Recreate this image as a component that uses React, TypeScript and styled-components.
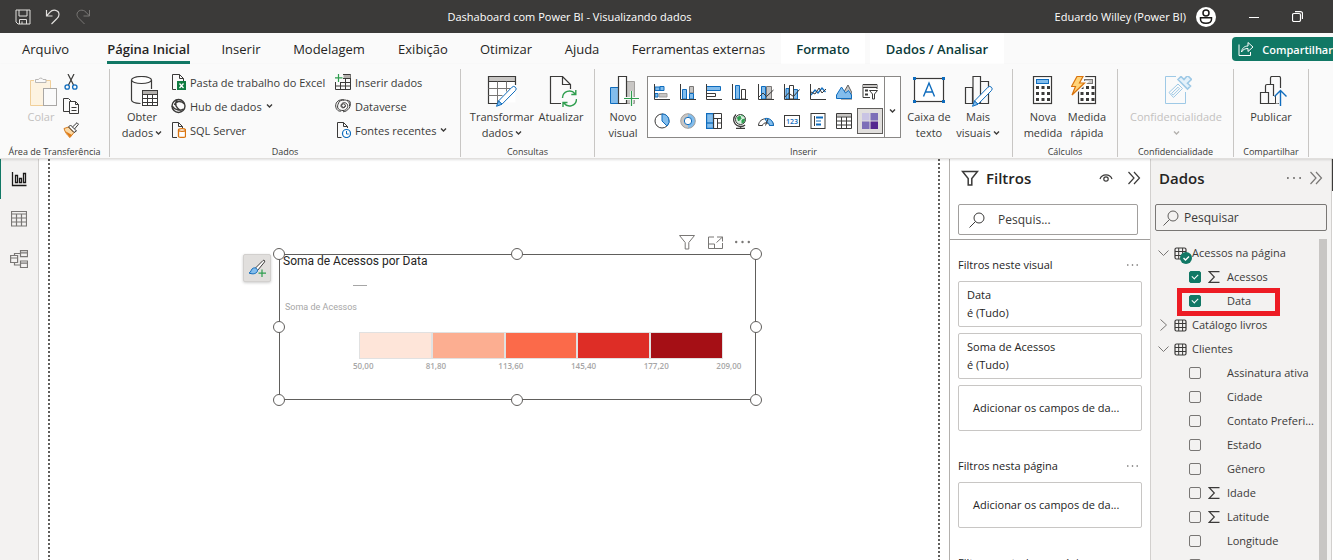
import React from "react";
import styled, { createGlobalStyle, css } from "styled-components";

const GlobalStyle = createGlobalStyle`
  *, *::before, *::after { box-sizing: border-box; }
  html, body, #root { height: 100%; }
  body {
    margin: 0;
    overflow: hidden;
    background: #fff;
    color: #252423;
    font-family: "Open Sans", "Noto Sans", sans-serif;
    font-size: 12px;
  }
  button, input { font: inherit; color: inherit; }
  button { background: none; border: 0; padding: 0; cursor: pointer; }
  svg { display: block; flex: none; }
`;

/* ---------- shell ---------- */

const Shell = styled.div`
  display: flex;
  flex-direction: column;
  height: 100vh;
  overflow: hidden;
`;

const TitleBar = styled.header`
  display: grid;
  grid-template-columns: 1fr auto 1fr;
  align-items: center;
  flex: none;
  height: 33px;
  background: #3b3a39;
  color: #fff;
  font-size: 11px;
`;

const QuickActions = styled.div`
  display: flex;
  align-items: center;
  gap: 14px;
  padding-left: 15px;
`;

const IconButton = styled.button`
  display: flex;
  align-items: center;
  justify-content: center;
  flex: none;
`;

const WindowTitle = styled.h1`
  margin: 0;
  padding-right: 194px;
  font-size: 11px;
  font-weight: 400;
  line-height: 16px;
`;

const WindowArea = styled.div`
  display: flex;
  align-items: center;
  justify-content: flex-end;
  gap: 33px;
  padding-right: 30px;
  white-space: nowrap;
`;

const Account = styled.button`
  display: flex;
  align-items: center;
  gap: 10px;
`;

/* ---------- tabs ---------- */

const TabBar = styled.nav`
  display: flex;
  align-items: stretch;
  flex: none;
  height: 31px;
  background: #fafafa;
`;

const Tab = styled.button<{ $width: number; $active?: boolean; $context?: boolean }>`
  display: flex;
  justify-content: center;
  flex: none;
  width: ${(p) => p.$width}px;
  font-size: 13px;
  line-height: 32px;
  white-space: nowrap;
  ${(p) => p.$active && css`font-weight: 600;`}
  ${(p) =>
    p.$context &&
    css`
      margin-right: 5px;
      background: #fff;
      color: #0b3b3a;
      font-weight: 600;
    `}
`;

const TabText = styled.span<{ $active?: boolean }>`
  height: 31px;
  ${(p) => p.$active && css`border-bottom: 3px solid #117865;`}
`;

const ShareButton = styled.button`
  display: flex;
  align-items: center;
  gap: 8px;
  flex: none;
  height: 24px;
  margin: 4px 0 0 auto;
  padding: 0 0 0 6px;
  border-radius: 4px 0 0 4px;
  background: #117865;
  color: #fff;
  font-size: 11px;
  font-weight: 600;
`;

/* ---------- ribbon ---------- */

const Ribbon = styled.section`
  position: relative;
  z-index: 1;
  display: flex;
  flex: none;
  height: 95px;
  padding-top: 5px;
  background: #fafafa;
  border-bottom: 1px solid #e1dfdd;
  box-shadow: 0 1px 2px rgba(0, 0, 0, 0.12);
`;

const Group = styled.div<{ $width: number }>`
  display: flex;
  flex-direction: column;
  justify-content: space-between;
  flex: none;
  width: ${(p) => p.$width}px;
  height: 88px;
  border-right: 1px solid #c8c6c4;
`;

const GroupBody = styled.div<{ $pad: number }>`
  display: flex;
  padding-left: ${(p) => p.$pad}px;
`;

const GroupName = styled.div`
  height: 11px;
  font-size: 9px;
  line-height: 12px;
  text-align: center;
  color: #3b3a39;
  white-space: nowrap;
`;

const BigButton = styled.button<{ $width: number; $disabled?: boolean }>`
  display: flex;
  flex-direction: column;
  align-items: center;
  flex: none;
  width: ${(p) => p.$width}px;
  padding-top: 7px;
  color: ${(p) => (p.$disabled ? "#c3c1bf" : "#3b3a39")};
  font-size: 11px;
  line-height: 16px;
  white-space: nowrap;
`;

const LabelLine = styled.span`
  display: flex;
  align-items: center;
  gap: 2px;
  min-height: 16px;
  &:first-of-type { margin-top: 1px; }
`;

const SmallColumn = styled.div<{ $width: number }>`
  display: flex;
  flex-direction: column;
  flex: none;
  width: ${(p) => p.$width}px;
  padding-top: 1px;
`;

const SmallButton = styled.button`
  display: flex;
  align-items: center;
  gap: 4px;
  height: 24px;
  color: #3b3a39;
  font-size: 11px;
  white-space: nowrap;
`;

const Gallery = styled.div`
  display: flex;
  flex: none;
  width: 254px;
  height: 62px;
  margin-top: 7px;
  background: #fff;
  border: 1px solid #8a8886;
`;

const GalleryGrid = styled.div`
  display: grid;
  grid-template-columns: repeat(9, 26px);
  grid-template-rows: 26px 26px;
  row-gap: 3px;
  flex: 1;
  padding: 2px 0 0 1px;
`;

const GalleryItem = styled.button<{ $selected?: boolean }>`
  display: flex;
  align-items: center;
  justify-content: center;
  ${(p) => p.$selected && css`background: #e1dfdd; border: 1px solid #605e5c;`}
`;

const GalleryMore = styled.button`
  display: flex;
  align-items: center;
  justify-content: center;
  width: 16px;
  padding-top: 8px;
  border-left: 1px solid #8a8886;
`;

/* ---------- workspace ---------- */

const Workspace = styled.div`
  display: flex;
  flex: 1;
  min-height: 0;
`;

const Rail = styled.nav`
  display: flex;
  flex-direction: column;
  flex: none;
  width: 39px;
  background: #f3f2f1;
  border-right: 1px solid #d2d0ce;
`;

const RailButton = styled.button<{ $active?: boolean }>`
  display: flex;
  align-items: center;
  justify-content: center;
  height: 40px;
  padding-right: 2px;
  border-left: 1px solid ${(p) => (p.$active ? "#117865" : "transparent")};
`;

const Canvas = styled.main`
  position: relative;
  flex: 1;
  min-width: 0;
  margin: 0 9px;
  background: #fff;
  &::before, &::after {
    content: "";
    position: absolute;
    top: 0;
    bottom: 0;
    width: 2px;
    background: repeating-linear-gradient(#605e5c 0 2px, #fff 2px 4px);
  }
  &::before { left: 0; }
  &::after { right: 0; }
`;

const Visual = styled.article`
  position: absolute;
  left: 231px;
  top: 95px;
  width: 477px;
  height: 146px;
  border: 1px solid #605e5c;
`;

const handleSpots = {
  tl: "left: -7px; top: -7px;",
  tc: "left: calc(50% - 7px); top: -7px;",
  tr: "right: -7px; top: -7px;",
  ml: "left: -7px; top: calc(50% - 6px);",
  mr: "right: -7px; top: calc(50% - 6px);",
  bl: "left: -7px; bottom: -7px;",
  bc: "left: calc(50% - 7px); bottom: -7px;",
  br: "right: -7px; bottom: -7px;",
};

const Handle = styled.span<{ $spot: keyof typeof handleSpots }>`
  position: absolute;
  width: 12px;
  height: 12px;
  background: #fff;
  border: 1px solid #605e5c;
  border-radius: 50%;
  ${(p) => handleSpots[p.$spot]}
`;

const VisualTools = styled.div`
  position: absolute;
  right: 5px;
  top: -21px;
  display: flex;
  align-items: center;
  gap: 12px;
`;

const FormatButton = styled.button`
  position: absolute;
  left: -37px;
  top: -1px;
  display: flex;
  align-items: center;
  justify-content: center;
  width: 28px;
  height: 28px;
  background: #e1dfdd;
  border: 1px solid #d2d0ce;
  border-radius: 2px;
  box-shadow: 0 1px 3px rgba(0, 0, 0, 0.2);
`;

const VisualTitle = styled.h2`
  margin: 0;
  padding: 0 3px;
  color: #252423;
  font-family: Roboto, sans-serif;
  font-size: 12px;
  font-weight: 400;
  line-height: 13px;
`;

const CategoryMark = styled.hr`
  width: 14px;
  height: 1px;
  margin: 17px 0 0 73px;
  border: 0;
  background: #a6a6a6;
`;

const MeasureName = styled.div`
  padding: 15px 0 1px 5px;
  color: #a6a6a6;
  font-family: Roboto, sans-serif;
  font-size: 9px;
  line-height: 12px;
`;

const ColorScale = styled.div`
  display: grid;
  grid-template-columns: repeat(5, 1fr);
  gap: 2px;
  width: 364px;
  height: 27px;
  margin: 18px 0 0 79px;
  padding: 1px;
  background: #e1e1e1;
`;

const Swatch = styled.span<{ $color: string }>`
  background: ${(p) => p.$color};
`;

const ScaleLabels = styled.div`
  display: grid;
  grid-template-columns: repeat(6, 1fr);
  width: 436px;
  margin: 1px 0 0 73px;
  color: #a6a6a6;
  font-size: 8px;
  font-weight: 600;
  line-height: 12px;
`;

/* ---------- filters pane ---------- */

const FilterPane = styled.aside`
  display: flex;
  flex-direction: column;
  flex: none;
  width: 201px;
  background: #fff;
  border-left: 1px solid #b3b0ad;
  overflow: hidden;
`;

const PaneHeader = styled.div<{ $pad: string; $gap: number }>`
  display: flex;
  align-items: center;
  gap: ${(p) => p.$gap}px;
  flex: none;
  height: 38px;
  padding: ${(p) => p.$pad};
`;

const PaneTitle = styled.h2`
  flex: 1;
  margin: 0;
  font-size: 15px;
  font-weight: 600;
  line-height: 20px;
`;

const SearchBox = styled.label<{ $margin: string; $height: number; $color: string; $gap: number }>`
  display: flex;
  align-items: center;
  gap: ${(p) => p.$gap}px;
  flex: none;
  height: ${(p) => p.$height}px;
  margin: ${(p) => p.$margin};
  padding-left: ${(p) => (p.$gap > 8 ? 10 : 7)}px;
  border: 1px solid ${(p) => p.$color};
  border-radius: 2px;
`;

const SearchInput = styled.input`
  flex: 1;
  min-width: 0;
  padding: 0;
  border: 0;
  outline: 0;
  background: transparent;
  font-size: 12px;
  &::placeholder { color: #3b3a39; opacity: 1; }
`;

const FilterBody = styled.div`
  flex: 1;
  min-height: 0;
  margin-top: 4px;
  padding: 0 8px;
  border-top: 1px solid #a19f9d;
  overflow: hidden;
`;

const FilterSection = styled.section`
  display: flex;
  flex-direction: column;
  gap: 6px;
  padding-top: 17px;
  & + & { padding-top: 27px; }
`;

const SectionHead = styled.div`
  display: flex;
  align-items: center;
  justify-content: space-between;
  height: 18px;
  padding: 0 4px 2px 0;
`;

const SectionTitle = styled.h3`
  margin: 0;
  font-size: 11px;
  font-weight: 400;
  line-height: 16px;
`;

const FilterCard = styled.div`
  height: 46px;
  padding: 4px 8px;
  border: 1px solid #c8c6c4;
  border-radius: 2px;
  font-size: 11px;
  line-height: 18px;
`;

const DropCard = styled(FilterCard)`
  display: flex;
  align-items: center;
  padding: 0 14px;
  white-space: nowrap;
`;

/* ---------- data pane ---------- */

const DataPane = styled.aside`
  display: flex;
  flex-direction: column;
  flex: none;
  width: 182px;
  background: #f3f2f1;
  border-left: 1px solid #d2d0ce;
  border-right: 1px solid #d2d0ce;
  overflow: hidden;
`;

const TreeArea = styled.div`
  display: flex;
  flex: 1;
  min-height: 0;
  margin-top: 8px;
  padding-right: 4px;
`;

const Tree = styled.ul`
  flex: 1;
  min-width: 0;
  margin: 0;
  padding: 2px 0 0;
  list-style: none;
  overflow: hidden;
`;

const Thumb = styled.div`
  flex: none;
  width: 8px;
  background: #c8c6c4;
`;

const TreeRow = styled.li`
  position: relative;
  height: 24px;
  color: #3b3a39;
  font-size: 11px;
  line-height: 24px;
  white-space: nowrap;
`;

const TableButton = styled.button`
  display: flex;
  align-items: center;
  gap: 5px;
  height: 24px;
  padding-left: 7px;
`;

const TableMark = styled.span`
  position: relative;
  display: block;
  width: 13px;
`;

const UsedBadge = styled.span`
  position: absolute;
  left: 6px;
  top: 5px;
`;

const FieldLabel = styled.label`
  display: grid;
  grid-template-columns: 12px 12px 1fr;
  column-gap: 7px;
  align-items: center;
  height: 24px;
  padding-left: 38px;
`;

const CheckBox = styled.input`
  appearance: none;
  position: relative;
  width: 12px;
  height: 12px;
  margin: 0;
  border: 1px solid #797775;
  border-radius: 2px;
  &:checked { background: #117865; border-color: #117865; }
  &:checked::after {
    content: "";
    position: absolute;
    left: 2px;
    top: 2px;
    width: 6px;
    height: 4px;
    border-left: 1px solid #fff;
    border-bottom: 1px solid #fff;
    transform: rotate(-45deg);
  }
`;

const RedFrame = styled.span`
  position: absolute;
  left: 26px;
  top: -1px;
  width: 103px;
  height: 28px;
  border: 5px solid #ed1c24;
  pointer-events: none;
`;

const EdgeScroll = styled.div`
  flex: none;
  width: 1px;
  height: 32px;
  background: #3b3a39;
`;

/* ---------- icons ---------- */

const INK = "#3b3a39";
const BLUE = "#0f6cbd";
const SKY = "#83bdec";
const GREEN = "#2f9e4f";
const GREY = "#c8c6c4";

type SvgProps = { w?: number; h?: number; stroke?: string; children: React.ReactNode };
const Svg = ({ w = 16, h = w, stroke = INK, children }: SvgProps) => (
  <svg width={w} height={h} viewBox={`0 0 ${w} ${h}`} fill="none" stroke={stroke} strokeWidth={1} aria-hidden="true">
    {children}
  </svg>
);

const Chevron = ({ color = INK }: { color?: string }) => (
  <Svg w={7} h={6} stroke={color}><path d="M1 1.5 3.5 4 6 1.5" strokeWidth={1.4} /></Svg>
);

const Dots = ({ w = 15, r = 1.2, color = "#605e5c" }: { w?: number; r?: number; color?: string }) => (
  <Svg w={w} h={4} stroke="none">
    <g fill={color}><circle cx={r} cy={2} r={r} /><circle cx={w / 2} cy={2} r={r} /><circle cx={w - r} cy={2} r={r} /></g>
  </Svg>
);

const DoubleChevron = ({ color = INK }: { color?: string }) => (
  <Svg w={14} h={14} stroke={color}><path d="M1.5 1 7 7 1.5 13M7 1 12.5 7 7 13" strokeWidth={1.2} /></Svg>
);

const Funnel = ({ color = INK, weight = 1.5 }: { color?: string; weight?: number }) => (
  <Svg w={18} h={16} stroke={color}><path d="M1.5 1.5h15L10.8 8.5V15H7.2V8.5Z" strokeWidth={weight} /></Svg>
);

const Lens = ({ color = INK }: { color?: string }) => (
  <Svg w={16} h={16} stroke={color}><circle cx={10} cy={6} r={5} /><path d="M6.5 9.5 .5 15.5" /></Svg>
);

const Sigma = () => <Svg w={12} h={12}><path d="M11.5 .7H1.2L6.3 6 1.2 11.3H11.5" strokeWidth={1.2} /></Svg>;

const TableIcon = () => (
  <Svg w={13} h={13}><rect x={1} y={1} width={11} height={11} rx={1.5} strokeWidth={1.2} /><path d="M1 4.5h11M1 8.5h11M4.7 1v11M8.6 1v11" /></Svg>
);

const Pencil = () => (
  <g>
    <path d="M12.5 25 26 11.2a2.3 2.3 0 0 1 3.4 3.4L16 28.2Z" fill="#fff" stroke={BLUE} />
    <path d="M12.5 25 10.5 30.3 16 28.2Z" fill={SKY} stroke={BLUE} />
  </g>
);

const icons = {
  save: <Svg stroke="#e1dfdd"><path d="M1 1h14v14H3L1 13ZM4 1v6h8V1M4.5 15v-4.5h7V15M7 12.5V15" /></Svg>,
  undo: <Svg stroke="#e1dfdd"><path d="M1.5 1v6h6M1.5 7 5 3.2C8-.3 14 1 14 5.4c0 2-.8 2.8-2 4.1L6.5 15" strokeWidth={1.2} /></Svg>,
  redo: <Svg stroke="#797775"><path d="M14.5 1v6h-6M14.5 7 11 3.2C8-.3 2 1 2 5.4c0 2 .8 2.8 2 4.1L9.5 15" /></Svg>,
  avatar: (
    <Svg w={20} stroke="#1b1a19"><circle cx={10} cy={10} r={10} fill="#fff" stroke="none" /><circle cx={10} cy={6} r={3} strokeWidth={1.5} /><path d="M4.5 10.7h11v1.5c0 2.6-2.5 4-5.5 4s-5.500-1.400-5.500-4Z" strokeWidth={1.5} /></Svg>
  ),
  minimize: <Svg w={10} h={10} stroke="#fff"><path d="M0 5.5h10" /></Svg>,
  restore: <Svg w={11} h={11} stroke="#fff"><rect x={.5} y={2.500} width={8} height={8} rx={1.500} strokeWidth={1.2} /><path d="M3 .6h5.500a2 2 0 0 1 2 2V8" strokeWidth={1.2} /></Svg>,
  share: <Svg stroke="#fff"><path d="M1 3.500V14.500H12.500V11M3.500 11c.5-4 3-6 6.500-6V1.500L15 6l-5 4.500V7.500c-3 0-5 1-6.500 3.500Z" /></Svg>,
  paste: (
    <Svg w={32}>
      <path d="M5.500 4.500h20v25h-20Z" fill="#fdf3e1" stroke="#f0cf9a" /><path d="M9 4.500h12" stroke="#fafafa" strokeWidth={3} />
      <path d="M10.500 6.500v-3h3a2.500 2.500 0 0 1 4.500 0h3v3Z" fill="#fafafa" stroke="#b9b7b5" /><rect x={18.500} y={12.500} width={13} height={17} fill="#fafafa" stroke="#a9a7a5" />
    </Svg>
  ),
  cut: (
    <Svg><path d="M5 0 10.500 11M11 0 5.500 11" strokeWidth={1.2} /><circle cx={4.200} cy={13} r={2.200} stroke={BLUE} strokeWidth={1.3} /><circle cx={11.800} cy={13} r={2.200} stroke={BLUE} strokeWidth={1.3} /></Svg>
  ),
  copy: <Svg><path d="M6 13.500H.5V.5h5L8 3M6.500 3.500h6l3 3v9h-9ZM12.500 3.500v3h3M8.500 9.500h5M8.500 12.500h5" /></Svg>,
  brush: (
    <Svg><path d="M1 6.500 5.500 5 11 10.500 7 15.500C4 13 2 10 1 6.500Z" fill="#fbd9a5" stroke="#d67b1e" /><path d="M2 9 9 13 7 15.500Z" fill="#e07b16" stroke="none" /><path d="M5.500 5 7.500 3l6 6-2.500 1.500ZM9.500 5 14 .7l1.500 1.500L11.500 7" /></Svg>
  ),
  database: (
    <Svg w={32}>
      <ellipse cx={15.500} cy={4} rx={10} ry={3.500} fill="#fff" strokeWidth={1.2} /><path d="M5.500 4v20c0 1.800 3.500 3.200 9 3.500M25.500 4v9" strokeWidth={1.2} />
      <rect x={16.500} y={14.500} width={15} height={15} fill="#fff" /><path d="M17 15h14v3H17Z" fill="#b3b0ad" stroke="none" /><path d="M16.500 18.500h15M16.500 22.500h15M16.500 26.500h15M21.500 18.500v11M26.500 18.500v11" />
    </Svg>
  ),
  excel: (
    <Svg><path d="M6 15.500H2.500V.5h7l4 4V7M9.500.5v4h4" /><rect x={7} y={7} width={9} height={9} fill="#107c41" stroke="none" /><path d="M9.500 9.500l4 4.500M13.500 9.500l-4 4.500" stroke="#fff" strokeWidth={1.3} /></Svg>
  ),
  hub: (
    <Svg><circle cx={8.500} cy={8} r={6.500} strokeWidth={1.400} /><path d="M2 8c3 4.500 8 5 11.500 3M7 1.800C4 6.500 6 10 11.500 13.300M14.500 6c-3.500-4-9-3-10 1" strokeWidth={1.400} /></Svg>
  ),
  sql: (
    <Svg><path d="M7 15.500H2.500V.5h6l4 4V6M8.500.5v4h4" /><path d="M8.500 8v6.500c0 1.200 7 1.200 7 0V8" fill="#fff" stroke="#d9730d" strokeWidth={1.300} /><ellipse cx={12} cy={8} rx={3.500} ry={1.300} fill="#fff" stroke="#d9730d" strokeWidth={1.300} /></Svg>
  ),
  insertData: (
    <Svg><path d="M8 .5h7.500v15H.5V8" /><path d="M8.500 1h7v3h-7Z" fill="#b3b0ad" stroke="none" /><path d="M8 4.500h7.500M5 8.500h10.500M.5 12H15.500M5.500 8v7.500M10.500 4.500v11" /><path d="M3.500 0v8M0 3.800h7.500" stroke={GREEN} strokeWidth={1.200} /></Svg>
  ),
  dataverse: (
    <Svg><path d="M10.500 7.500c0 3-4.500 3-4.500.5C6 5 9 3.800 11.300 5.300c3 2 1 7.200-3.300 7.200-4 0-6.500-2-5-6.200C4 3 6.500 1.500 9 2 4 1 .5 4 .7 8c.2 4 3.300 5.800 5.500 5M15 3.500c1.500 5-2 10-7 10.300M9 2c3.500-.3 6 2.500 5.500 6M12 2.200c1 .2 2 .600 3 1.300" /><circle cx={8.500} cy={7.600} r={1.800} /></Svg>
  ),
  recent: (
    <Svg><path d="M6.500 15.500h-4V.5h6l4 4V6M8.500.5v4h4" /><circle cx={11.500} cy={11.500} r={4} fill="#fff" stroke={BLUE} strokeWidth={1.200} /><path d="M11.500 9v3h2.200" stroke={BLUE} /></Svg>
  ),
  transform: (
    <Svg w={32}><path d="M2.500.5h27v26h-27Z" fill="#fff" stroke="none" /><path d="M3 1h27v4H3Z" fill={GREY} stroke="none" /><path d="M14 27.500H2.500V.5h27V9M2.500 5.500h27" strokeWidth={1.200} /><path d="M2.500 12.500h22M2.500 19.500h14M11.500 5.500v22M20.500 5.500v10" stroke="#797775" /><Pencil /></Svg>
  ),
  refresh: (
    <Svg w={32}><path d="M16 27.500H5.500V.5h12l8 8V13M17.500.5v8h8" strokeWidth={1.200} /><path d="M17.500 22a7 7 0 0 1 12.500-4.300M30.800 14v4.500h-4.500M31.500 23a7 7 0 0 1-12.500 4.300M18 31v-4.500h4.500" stroke={GREEN} strokeWidth={1.400} /></Svg>
  ),
  newVisual: (
    <Svg w={32}><path d="M3.500 11.500h8v16h-8Z" fill={SKY} stroke={BLUE} /><path d="M19.500 5.500h8v22h-8Z" fill={GREY} stroke="#a19f9d" /><path d="M11.500.5h8v27h-8Z" fill="#fff" strokeWidth={1.200} /><path d="M24.500 15v15M17 22.500h15" stroke="#fafafa" strokeWidth={3} /><path d="M24.500 15v15M17 22.500h15" stroke={GREEN} strokeWidth={1.200} /></Svg>
  ),
  textBox: (
    <Svg w={32}><rect x={1.500} y={2.500} width={29} height={23} fill="#fff" strokeWidth={1.200} /><path d="M10.500 20.500 16 7l5.500 13.500M12.500 16h7" stroke={BLUE} strokeWidth={1.400} /><path d="M0 1h3v3H0ZM29 1h3v3h-3ZM0 24h3v3H0ZM29 24h3v3h-3Z" fill={BLUE} stroke="none" /></Svg>
  ),
  moreVisuals: (
    <Svg w={32}><path d="M3.500 11.500h7v16h-7ZM18.500 5.500h8v22h-8ZM11 .5h7.500v27H11Z" fill="#fafafa" strokeWidth={1.200} /><Pencil /></Svg>
  ),
  measure: (
    <Svg w={32}><rect x={6.500} y={.5} width={18} height={27} fill="#fff" strokeWidth={1.200} /><rect x={9.500} y={3.500} width={12} height={4} fill={SKY} stroke={BLUE} /><path d="M9 11.500h14M9 17.500h14M9 23.500h14" strokeWidth={3} strokeDasharray="3 2.500" /></Svg>
  ),
  quickMeasure: (
    <Svg w={32}><rect x={7.500} y={.5} width={17} height={27} fill="#fff" strokeWidth={1.200} /><rect x={13.500} y={3.500} width={8} height={4} fill={GREY} stroke="#797775" /><path d="M9.500 11.500h14M9.500 17.500h14M9.500 23.500h14" strokeWidth={3} strokeDasharray="3 2.500" /><path d="M6 .5h6L8.500 7h5L1 19 4.500 10.500H.5Z" fill="#ffd479" stroke="#fafafa" strokeWidth={4} /><path d="M6 .5h6L8.500 7h5L1 19 4.500 10.500H.5Z" fill="#ffd479" stroke="#d9730d" strokeWidth={1.200} /></Svg>
  ),
  sensitivity: (
    <Svg w={32} stroke="#9ec9e6"><path d="M16 .5H5.500v27h20V16" /><path d="M9 16.500 18 8l4.500 4.500-9 9ZM11.500 17.500 18 11.200l1.500 1.500L13.200 19Z" fill="#fafafa" /><path d="M18 3.500l3-3 3 3 3.500-4 4 3.800-4 4 3 2.700-3 3Z" fill="#e4f1fa" strokeWidth={1.600} /></Svg>
  ),
  publish: (
    <Svg w={32}><path d="M5.500 16.500h8v11h-8ZM10.500 16V10a1.500 1.500 0 0 1 1.500-1.500h6.500V20M15.500 8V2A1.500 1.500 0 0 1 17 .500h7A1.500 1.500 0 0 1 25.500 2v10M14 27.500h10" strokeWidth={1.200} /><path d="M15.500 20.500h8v7h-8Z" fill="#fafafa" stroke="none" /><path d="M13.500 27.500h7V20" /><path d="M25.500 30V14.500M19.500 20.500l6-6 6 6" stroke={BLUE} strokeWidth={1.400} /></Svg>
  ),
  report: <Svg stroke="#1b1a19"><path d="M1.500 1v13.500H15.500M4.500 4.500h2v7h-2ZM8.500 7.500h2v4h-2ZM12.500 2.500h2v9h-2Z" strokeWidth={1.300} /></Svg>,
  dataView: <Svg stroke="#797775"><path d="M.5 .5h15v14.500H.5ZM.5 3h15M.5 7h15M.5 11h15M5.500 3v12M10.500 3v12" strokeWidth={1.200} /></Svg>,
  model: <Svg w={18} stroke="#797775"><path d="M.6 5.500h7v7h-7ZM.6 8h7M10.500.600h7v6h-7ZM10.500 2.800h7M10.500 11h7v6.500h-7ZM10.500 13.200h7M4.500 5.500v-2h6M4.500 12.500v2.500h6" strokeWidth={1.200} /></Svg>,
  focus: <Svg w={15} h={13} stroke="#797775"><path d="M6 1H.5v11.500h14V7M9 1h5.500v4.500M14.500 1 8.500 6.500M.5 8h6v4.500" /></Svg>,
  formatBrush: (
    <Svg w={18} h={18}><path d="M7 9.500 15 1.500c1.200-.8 2.200.200 1.500 1.500L9.500 11.500Z" fill="#fff" /><path d="M1 14c2.500-.5 1.500-4 4.500-5 3-.8 5 2 3.500 4-2 2.500-5.500 2-8 1Z" fill={SKY} stroke={BLUE} /><path d="M14 10.500v7.500M10.500 14.200H18" stroke={GREEN} strokeWidth={1.200} /></Svg>
  ),
  eye: <Svg w={14} h={10}><path d="M1 6C3 .5 11 .5 13 6" strokeWidth={1.200} /><circle cx={7} cy={6} r={2.200} strokeWidth={1.200} /></Svg>,
  used: <Svg w={12} stroke="none"><circle cx={6} cy={6} r={6} fill="#117865" /><path d="M3.500 6l2 2L9 4.500" stroke="#fff" strokeWidth={1.400} /></Svg>,
  open: <Svg w={11} h={8} stroke="#797775"><path d="M.5 1.500 5.500 6.500 10.500 1.500" /></Svg>,
  closed: <Svg w={11} h={12} stroke="#797775"><path d="M2.500 .5 8.500 6 2.500 11.500" /></Svg>,
};

const galleryIcons: { name: string; art: React.ReactNode }[] = [
  { name: "Barras empilhadas", art: <><path d="M1 3h5v3.500H1ZM1 9.500h3V13H1Z" fill={SKY} stroke={BLUE} /><path d="M6 2.500h4v4H6Z" fill={SKY} stroke={BLUE} /><path d="M5 9.500h8V13H5Z" fill={GREY} stroke="#a19f9d" /><path d="M.5 0v15.500H16" /></> },
  { name: "Colunas empilhadas", art: <><path d="M2.500 5.500h4V15h-4Z" fill={SKY} stroke={BLUE} /><path d="M9.500 2.500h4V9h-4Z" fill={GREY} stroke="#797775" /><path d="M9.500 9.500h4V15h-4Z" fill={SKY} stroke={BLUE} /><path d="M.5 0v15.500H16" /></> },
  { name: "Barras clusterizadas", art: <><path d="M.5 2.500h14v4H.5Z" fill={SKY} stroke={BLUE} /><path d="M.5 9.500h9v3h-9M.5 0v15.500H16" /></> },
  { name: "Colunas clusterizadas", art: <><path d="M3.500 1.500h4V15h-4Z" fill={SKY} stroke={BLUE} /><path d="M9.500 5.500h4V15h-4ZM.5 0v15.500H16" /></> },
  { name: "Linha e colunas empilhadas", art: <><path d="M3.500 2.500h4V15h-4Z" fill={SKY} stroke={BLUE} /><path d="M8.500 2.500h5V15h-5Z" fill={GREY} stroke="#797775" /><path d="M.5 0v15.500H16M1 13l4-4 3.500 3.500L15.500 6" /></> },
  { name: "Linha e colunas clusterizadas", art: <><path d="M9.500 5.500h4V15h-4ZM2 4.500h3V15H2Z" fill={SKY} stroke={BLUE} /><path d="M5.500 1.500h4V15h-4Z" fill="#fff" /><path d="M.5 0v15.500H16M1 13l3.500-4 5 3.500 6-7" /></> },
  { name: "Linhas", art: <><path d="M1 11 5 6l3 3 4-5 3.500 4" stroke={BLUE} strokeWidth={1.300} /><path d="M.5 0v15.500H16M1 8l4 2 4-6 3 5 4-4" /></> },
  { name: "Área", art: <><path d="M5 13 12 1l4 8v6H5Z" fill={GREY} stroke="#605e5c" /><path d="M.5 14.500V11L5.500 3l4 6 3-2.500 3 4.500v3.500Z" fill={SKY} stroke={BLUE} /></> },
  { name: "Segmentação", art: <><path d="M8 13.500H1V.5h14V5M1 3.500h14" /><path d="M1 1h14v2H1Z" fill={GREY} stroke="none" /><path d="M3 6.500h3M3 10.500h3" strokeWidth={2} /><path d="M7.500 6.500h8L12.500 10v5h-2v-5Z" fill="#fff" /></> },
  { name: "Pizza", art: <><circle cx={8} cy={8} r={7} fill="#fff" /><path d="M8 1a7 7 0 0 1 5 12L8 8Z" fill={SKY} stroke={BLUE} /></> },
  { name: "Rosca", art: <><circle cx={8} cy={8} r={5.500} stroke={GREY} strokeWidth={3.500} /><path d="M8 2.500a5.500 5.500 0 0 1 0 11" stroke={SKY} strokeWidth={3.500} /><circle cx={8} cy={8} r={7.300} stroke="#a19f9d" /><circle cx={8} cy={8} r={3.700} stroke={BLUE} /></> },
  { name: "Treemap", art: <><path d="M.5.500h7v15h-7Z" fill={SKY} stroke={BLUE} strokeWidth={1.300} /><path d="M.5 10h7" stroke={BLUE} strokeWidth={1.300} /><path d="M7.500.500h8v15h-8ZM7.500 5.500h8M11.500 5.500v10M11.500 10h4" /></> },
  { name: "Mapa", art: <><circle cx={8.500} cy={6.500} r={5} fill="#d8efdf" /><path d="M5.500 4.500 8 3l1 2.500L6.500 8ZM10 7l2.500-1-.5 3-2 1ZM9.500 2.500l2 .500" fill={GREEN} stroke={GREEN} /><path d="M4 1.500C-.5 6 2 13 9 13.500c1.500 0 3-.5 4-1.500M8.500 13.500V15.500M4 15.500h9" strokeWidth={1.300} /></> },
  { name: "Medidor", art: <><path d="M.5 12.500c.5-9 14.500-9 15 0h-4c-.5-3.500-6.500-3.500-7 0Z" fill="#fff" /><path d="M7 5.500c4.500-.8 8 2 8.500 7h-4c0-1.500-1-2.800-2.500-3Z" fill={SKY} stroke={BLUE} /><path d="M7.500 12.500 10 6" /></> },
  { name: "Cartão", art: <><rect x={.5} y={2.500} width={15} height={11} /><g fill={BLUE} stroke="none" fontFamily="Open Sans, sans-serif" fontSize={7} fontWeight={600}><text x={2} y={10.500}>123</text></g></> },
  { name: "Cartão de várias linhas", art: <><rect x={1} y={.5} width={14} height={15} /><path d="M4.500 3v10" stroke={INK} /><path d="M6 4.500h7M6 11.500h5" stroke={BLUE} strokeWidth={2} /><path d="M6 8h5" stroke={BLUE} /></> },
  { name: "Tabela", art: <><path d="M1 1h14v2.500H1Z" fill={GREY} stroke="none" /><path d="M.5.500h15v15H.5ZM.5 4h15M.5 8h15M.5 12h15M5.500 4v11.500M10.500 4v11.500" /></> },
  { name: "Visual personalizado", art: <g stroke="none"><path d="M0 0h7.500v7.500H0Z" fill="#c9c4e4" /><path d="M8.500 0H16v7.500H8.500ZM0 8.500h7.500V16H0Z" fill="#7d6fb8" /><path d="M8.500 8.500H16V16H8.500Z" fill="#54278f" /></g> },
];

/* ---------- data ---------- */

const tabs = [
  { label: "Arquivo", width: 91 },
  { label: "Página Inicial", width: 115, active: true },
  { label: "Inserir", width: 70 },
  { label: "Modelagem", width: 106 },
  { label: "Exibição", width: 82 },
  { label: "Otimizar", width: 84 },
  { label: "Ajuda", width: 68 },
  { label: "Ferramentas externas", width: 165 },
  { label: "Formato", width: 84, context: true },
  { label: "Dados / Analisar", width: 134, context: true },
];

const scale = ["#fee5d9", "#fcae91", "#fb6a4a", "#de2d26", "#a50f15"];
const scaleLabels = ["50,00", "81,80", "113,60", "145,40", "177,20", "209,00"];

type Field = { name: string; checked?: boolean; sum?: boolean; framed?: boolean };
const tables: { name: string; used?: boolean; open: boolean; fields: Field[] }[] = [
  {
    name: "Acessos na página",
    used: true,
    open: true,
    fields: [{ name: "Acessos", checked: true, sum: true }, { name: "Data", checked: true, framed: true }],
  },
  { name: "Catálogo livros", open: false, fields: [] },
  {
    name: "Clientes",
    open: true,
    fields: [
      { name: "Assinatura ativa" },
      { name: "Cidade" },
      { name: "Contato Preferi..." },
      { name: "Estado" },
      { name: "Gênero" },
      { name: "Idade", sum: true },
      { name: "Latitude", sum: true },
      { name: "Longitude" },
      { name: "" },
    ],
  },
];

/* ---------- composed parts ---------- */

type BigProps = { icon: React.ReactNode; lines: string[]; width: number; menu?: boolean; disabled?: boolean };
const Big = ({ icon, lines, width, menu, disabled }: BigProps) => (
  <BigButton type="button" $width={width} $disabled={disabled} disabled={disabled}>
    {icon}
    {lines.map((line, i) => (
      <LabelLine key={i}>
        {line}
        {menu && i === lines.length - 1 && <Chevron color={disabled ? "#b3b0ad" : INK} />}
      </LabelLine>
    ))}
  </BigButton>
);

const Small = ({ icon, label, name, menu }: { icon: React.ReactNode; label?: string; name?: string; menu?: boolean }) => (
  <SmallButton type="button" aria-label={name}>
    {icon}
    {label}
    {menu && <Chevron />}
  </SmallButton>
);

const RibbonGroup = ({ name, width, pad, children }: { name: string; width: number; pad: number; children: React.ReactNode }) => (
  <Group $width={width}>
    <GroupBody $pad={pad}>{children}</GroupBody>
    <GroupName>{name}</GroupName>
  </Group>
);

const Section = ({ title, children }: { title: string; children?: React.ReactNode }) => (
  <FilterSection>
    <SectionHead>
      <SectionTitle>{title}</SectionTitle>
      <IconButton type="button" aria-label="Mais opções"><Dots w={11} r={0.8} /></IconButton>
    </SectionHead>
    {children}
  </FilterSection>
);

export default function App() {
  return (
    <Shell>
      <GlobalStyle />
      <TitleBar>
        <QuickActions>
          <IconButton type="button" aria-label="Salvar">{icons.save}</IconButton>
          <IconButton type="button" aria-label="Desfazer">{icons.undo}</IconButton>
          <IconButton type="button" aria-label="Refazer">{icons.redo}</IconButton>
        </QuickActions>
        <WindowTitle>Dashaboard com Power BI - Visualizando dados</WindowTitle>
        <WindowArea>
          <Account type="button">Eduardo Willey (Power BI){icons.avatar}</Account>
          <IconButton type="button" aria-label="Minimizar">{icons.minimize}</IconButton>
          <IconButton type="button" aria-label="Restaurar">{icons.restore}</IconButton>
        </WindowArea>
      </TitleBar>

      <TabBar>
        {tabs.map((t) => (
          <Tab key={t.label} type="button" $width={t.width} $active={t.active} $context={t.context}>
            <TabText $active={t.active}>{t.label}</TabText>
          </Tab>
        ))}
        <ShareButton type="button">{icons.share}Compartilhar</ShareButton>
      </TabBar>

      <Ribbon>
        <RibbonGroup name="Área de Transferência" width={110} pad={19}>
          <Big icon={icons.paste} lines={["Colar"]} width={44} disabled />
          <SmallColumn $width={22}>
            <Small icon={icons.cut} name="Recortar" />
            <Small icon={icons.copy} name="Copiar" />
            <Small icon={icons.brush} name="Pincel de formatação" />
          </SmallColumn>
        </RibbonGroup>
        <RibbonGroup name="Dados" width={351} pad={4}>
          <Big icon={icons.database} lines={["Obter", "dados"]} width={56} menu />
          <SmallColumn $width={165}>
            <Small icon={icons.excel} label="Pasta de trabalho do Excel" />
            <Small icon={icons.hub} label="Hub de dados" menu />
            <Small icon={icons.sql} label="SQL Server" />
          </SmallColumn>
          <SmallColumn $width={120}>
            <Small icon={icons.insertData} label="Inserir dados" />
            <Small icon={icons.dataverse} label="Dataverse" />
            <Small icon={icons.recent} label="Fontes recentes" menu />
          </SmallColumn>
        </RibbonGroup>
        <RibbonGroup name="Consultas" width={134} pad={7}>
          <Big icon={icons.transform} lines={["Transformar", "dados"]} width={68} menu />
          <Big icon={icons.refresh} lines={["Atualizar"]} width={50} />
        </RibbonGroup>
        <RibbonGroup name="Inserir" width={418} pad={4}>
          <Big icon={icons.newVisual} lines={["Novo", "visual"]} width={48} />
          <Gallery>
            <GalleryGrid>
              {galleryIcons.map((g, i) => (
                <GalleryItem key={g.name} type="button" aria-label={g.name} $selected={i === galleryIcons.length - 1}>
                  <Svg>{g.art}</Svg>
                </GalleryItem>
              ))}
            </GalleryGrid>
            <GalleryMore type="button" aria-label="Mais visuais"><Chevron /></GalleryMore>
          </Gallery>
          <Big icon={icons.textBox} lines={["Caixa de", "texto"]} width={56} />
          <Big icon={icons.moreVisuals} lines={["Mais", "visuais"]} width={42} menu />
        </RibbonGroup>
        <RibbonGroup name="Cálculos" width={105} pad={8}>
          <Big icon={icons.measure} lines={["Nova", "medida"]} width={44} />
          <Big icon={icons.quickMeasure} lines={["Medida", "rápida"]} width={44} />
        </RibbonGroup>
        <RibbonGroup name="Confidencialidade" width={116} pad={8}>
          <Big icon={icons.sensitivity} lines={["Confidencialidade", ""]} width={100} menu disabled />
        </RibbonGroup>
        <RibbonGroup name="Compartilhar" width={75} pad={9}>
          <Big icon={icons.publish} lines={["Publicar"]} width={56} />
        </RibbonGroup>
      </Ribbon>

      <Workspace>
        <Rail>
          <RailButton type="button" aria-label="Relatório" $active>{icons.report}</RailButton>
          <RailButton type="button" aria-label="Dados">{icons.dataView}</RailButton>
          <RailButton type="button" aria-label="Modelo">{icons.model}</RailButton>
        </Rail>

        <Canvas>
          <Visual>
            <VisualTitle>Soma de Acessos por Data</VisualTitle>
            <CategoryMark />
            <MeasureName>Soma de Acessos</MeasureName>
            <ColorScale>
              {scale.map((c) => <Swatch key={c} $color={c} />)}
            </ColorScale>
            <ScaleLabels>
              {scaleLabels.map((l) => <span key={l}>{l}</span>)}
            </ScaleLabels>
            {(Object.keys(handleSpots) as (keyof typeof handleSpots)[]).map((s) => <Handle key={s} $spot={s} />)}
            <VisualTools>
              <IconButton type="button" aria-label="Filtros do visual"><Funnel color="#797775" weight={1} /></IconButton>
              <IconButton type="button" aria-label="Modo de foco">{icons.focus}</IconButton>
              <IconButton type="button" aria-label="Mais opções"><Dots color="#797775" /></IconButton>
            </VisualTools>
            <FormatButton type="button" aria-label="Formatar">{icons.formatBrush}</FormatButton>
          </Visual>
        </Canvas>

        <FilterPane>
          <PaneHeader $pad="0 9px 0 11px" $gap={7}>
            <Funnel />
            <PaneTitle>Filtros</PaneTitle>
            <IconButton type="button" aria-label="Mostrar">{icons.eye}</IconButton>
            <span />
            <IconButton type="button" aria-label="Recolher"><DoubleChevron /></IconButton>
          </PaneHeader>
          <SearchBox $margin="7px 12px 0 8px" $height={31} $color="#a19f9d" $gap={13}>
            <Lens />
            <SearchInput type="text" placeholder="Pesquis..." aria-label="Pesquisar filtros" />
          </SearchBox>
          <FilterBody>
            <Section title="Filtros neste visual">
              <FilterCard>Data<br />é (Tudo)</FilterCard>
              <FilterCard>Soma de Acessos<br />é (Tudo)</FilterCard>
              <DropCard>Adicionar os campos de da...</DropCard>
            </Section>
            <Section title="Filtros nesta página">
              <DropCard>Adicionar os campos de da...</DropCard>
            </Section>
            <Section title="Filtros em todas as páginas" />
          </FilterBody>
        </FilterPane>

        <DataPane>
          <PaneHeader $pad="0 8px 0 8px" $gap={8}>
            <PaneTitle>Dados</PaneTitle>
            <IconButton type="button" aria-label="Mais opções"><Dots w={14} r={0.9} /></IconButton>
            <IconButton type="button" aria-label="Recolher"><DoubleChevron color="#797775" /></IconButton>
          </PaneHeader>
          <SearchBox $margin="7px 4px 0 4px" $height={27} $color="#797775" $gap={5}>
            <Lens color="#605e5c" />
            <SearchInput type="text" placeholder="Pesquisar" aria-label="Pesquisar dados" />
          </SearchBox>
          <TreeArea>
            <Tree>
              {tables.map((t) => (
                <React.Fragment key={t.name}>
                  <TreeRow>
                    <TableButton type="button" aria-expanded={t.open}>
                      {t.open ? icons.open : icons.closed}
                      <TableMark>
                        <TableIcon />
                        {t.used && <UsedBadge>{icons.used}</UsedBadge>}
                      </TableMark>
                      {t.name}
                    </TableButton>
                  </TreeRow>
                  {t.fields.map((f) => (
                    <TreeRow key={f.name}>
                      <FieldLabel>
                        <CheckBox type="checkbox" defaultChecked={f.checked} />
                        {f.sum ? <Sigma /> : <span />}
                        <span>{f.name}</span>
                      </FieldLabel>
                      {f.framed && <RedFrame />}
                    </TreeRow>
                  ))}
                </React.Fragment>
              ))}
            </Tree>
            <Thumb />
          </TreeArea>
        </DataPane>
        <EdgeScroll />
      </Workspace>
    </Shell>
  );
}
